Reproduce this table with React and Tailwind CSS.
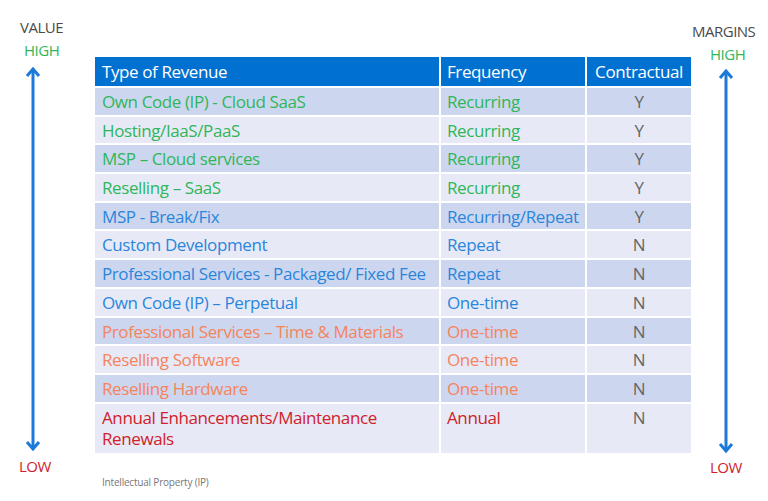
const rows = [
  { type: "Own Code (IP) - Cloud SaaS", freq: "Recurring", c: "Y", color: "text-[#2fb65a]" },
  { type: "Hosting/IaaS/PaaS", freq: "Recurring", c: "Y", color: "text-[#2fb65a]" },
  { type: "MSP – Cloud services", freq: "Recurring", c: "Y", color: "text-[#2fb65a]" },
  { type: "Reselling – SaaS", freq: "Recurring", c: "Y", color: "text-[#2fb65a]" },
  { type: "MSP - Break/Fix", freq: "Recurring/Repeat", c: "Y", color: "text-[#2a86dc]" },
  { type: "Custom Development", freq: "Repeat", c: "N", color: "text-[#2a86dc]" },
  { type: "Professional Services - Packaged/ Fixed Fee", freq: "Repeat", c: "N", color: "text-[#2a86dc]" },
  { type: "Own Code (IP) – Perpetual", freq: "One-time", c: "N", color: "text-[#2a86dc]" },
  { type: "Professional Services – Time & Materials", freq: "One-time", c: "N", color: "text-[#f5845c]" },
  { type: "Reselling Software", freq: "One-time", c: "N", color: "text-[#f5845c]" },
  { type: "Reselling Hardware", freq: "One-time", c: "N", color: "text-[#f5845c]" },
  { type: "Annual Enhancements/Maintenance Renewals", freq: "Annual", c: "N", color: "text-[#d0212a]", tall: true },
];

const Arrow = ({ height }) => (
  <svg width="16" height={height} viewBox={`0 0 16 ${height}`} className="block">
    <line x1="8" y1="2" x2="8" y2={height - 2} stroke="#1a79d9" strokeWidth="3" />
    <polyline points="2,9 8,2 14,9" fill="none" stroke="#1a79d9" strokeWidth="3" strokeLinejoin="miter" />
    <polyline points={`2,${height - 9} 8,${height - 2} 14,${height - 9}`} fill="none" stroke="#1a79d9" strokeWidth="3" />
  </svg>
);

export default function App() {
  return (
    <div className="relative w-[768px] h-[501px] bg-white overflow-hidden" style={{ fontFamily: '"Open Sans", "Noto Sans", sans-serif' }}>
      <div className="flex">
        {/* left scale */}
        <div className="w-[95px] shrink-0 flex flex-col items-start">
          <div className="ml-[20px] mt-[18px] text-[15px] leading-[18px] text-[#4a4a4a] tracking-[-0.5px]">VALUE</div>
          <div className="ml-[24px] mt-[5px] text-[15px] leading-[18px] text-[#2fb65a] tracking-[-0.5px]">HIGH</div>
          <div className="ml-[25px] mt-[8px]">
            <Arrow height={384} />
          </div>
          <div className="ml-[19px] mt-[6px] text-[15px] leading-[18px] text-[#d0212a] tracking-[-0.5px]">LOW</div>
        </div>

        {/* table */}
        <div className="w-[596px] shrink-0 pt-[57px]">
          <div className="grid grid-cols-[344px_144px_104px] gap-x-[2px] gap-y-[2px] text-[17px] tracking-[-0.4px]">
            <div className="bg-[#0071d1] text-white h-[29px] leading-[21px] pt-[4px] pl-[7px]">Type of Revenue</div>
            <div className="bg-[#0071d1] text-white h-[29px] leading-[21px] pt-[4px] pl-[6px]">Frequency</div>
            <div className="bg-[#0071d1] text-white h-[29px] leading-[21px] pt-[4px] text-center">Contractual</div>
            {rows.map((r, i) => {
              const bg = i % 2 === 0 ? "bg-[#cdd6ef]" : "bg-[#e7eaf6]";
              const h = r.tall ? "h-[49px]" : "h-[26.7px]";
              return [
                <div key={i + "a"} className={`${bg} ${h} ${r.color} leading-[21px] pt-[3px] pl-[7px] pr-[4px]`}>{r.type}</div>,
                <div key={i + "b"} className={`${bg} ${h} ${r.color} leading-[21px] pt-[3px] pl-[6px]`}>{r.freq}</div>,
                <div key={i + "c"} className={`${bg} ${h} text-[#666666] leading-[21px] pt-[3px] text-center`}>{r.c}</div>,
              ];
            })}
          </div>
          <div className="mt-[23px] ml-[7px] text-[10px] leading-[12px] text-[#777777] tracking-[-0.2px]">Intellectual Property (IP)</div>
        </div>

        {/* right scale */}
        <div className="flex-1 flex flex-col items-start">
          <div className="ml-[1px] mt-[22px] text-[15px] leading-[18px] text-[#4a4a4a] tracking-[-0.5px]">MARGINS</div>
          <div className="ml-[19px] mt-[5px] text-[15px] leading-[18px] text-[#2fb65a] tracking-[-0.5px]">HIGH</div>
          <div className="ml-[27px] mt-[6px]">
            <Arrow height={384} />
          </div>
          <div className="ml-[19px] mt-[5px] text-[15px] leading-[18px] text-[#d0212a] tracking-[-0.5px]">LOW</div>
        </div>
      </div>
    </div>
  );
}
